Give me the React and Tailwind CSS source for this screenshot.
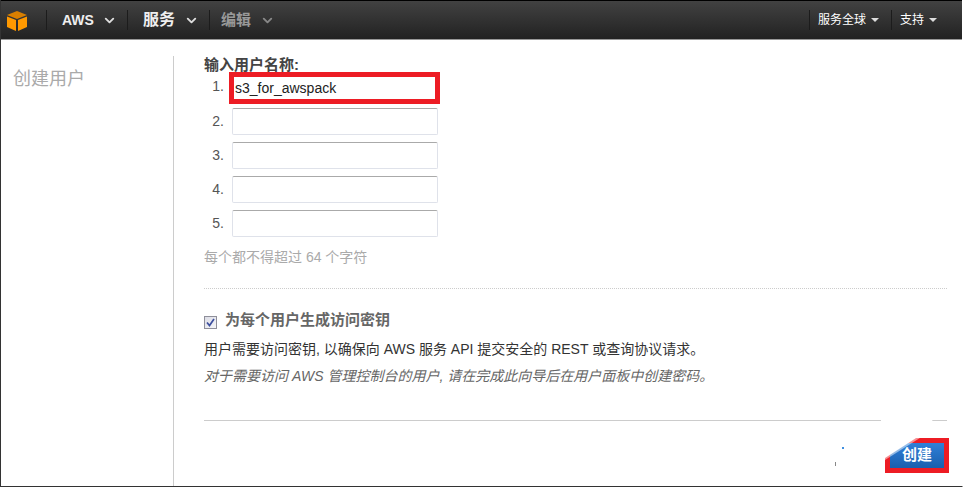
import { ChevronDown } from "lucide-react";

const cjk = "font-['Liberation_Sans','Noto_Sans_CJK_SC',sans-serif]";

function NavDivider() {
  return <div className="w-px h-[20px] bg-[#4d4d4d] border-r border-[#1c1c1c]" />;
}

function Caret() {
  return <span className="ml-[5px] w-0 h-0 border-x-[4px] border-x-transparent border-t-[4px] border-t-[#ddd]" />;
}

function NameRow({ n, value, active }) {
  if (active) {
    return (
      <div className="flex items-center h-[27px] mb-[7px]">
        <span className="w-[20px] shrink-0 text-right text-[14px] text-[#555] mr-[5px] -mt-[3px]">{n}.</span>
        <div className="w-[211px] h-[32px] shrink-0 border-[5px] border-[#ed1c24] bg-white pl-[1px] text-[14px] leading-[23px] text-[#222]">{value}</div>
      </div>
    );
  }
  return (
    <div className="flex items-center h-[27px] mb-[7px]">
      <span className="w-[20px] text-right text-[14px] text-[#555] mr-[8px]">{n}.</span>
      <div className="w-[206px] h-[27px] bg-white border border-[#dfe2ea] border-t-[#aaa] rounded-[2px]" />
    </div>
  );
}

export default function App() {
  return (
    <div className={`w-[963px] h-[487px] relative overflow-hidden bg-white flex flex-col border-l border-r border-b border-l-[#333] border-r-white border-b-[#333] ${cjk}`}>
      {/* top bar */}
      <div className="h-[40px] shrink-0 bg-gradient-to-b from-[#424242] to-[#222] border-t border-black border-b border-b-[#999] flex items-center text-white">
        <svg width="22" height="22" viewBox="0 0 22 22" className="ml-[5px] mr-[18px] mt-[1px]">
          <path d="M11 1 L21 5 L11 9 L1 5 Z" fill="#d97f00" />
          <path d="M1 6.5 L10 10 V21 L1 17 Z" fill="#ff9900" />
          <path d="M21 6.5 L12 10 V21 L21 17 Z" fill="#ff9900" />
        </svg>
        <NavDivider />
        <span className="ml-[15px] w-[31px] text-[14px] font-bold text-[#eee]">AWS</span>
        <ChevronDown size={15} strokeWidth={3} className="ml-[9px] mr-[10px] text-[#ddd]" />
        <NavDivider />
        <span className="ml-[15px] w-[32px] text-[16px] font-bold text-[#eee]">服务</span>
        <ChevronDown size={15} strokeWidth={3} className="ml-[9px] mr-[10px] text-[#ddd]" />
        <NavDivider />
        <span className="ml-[11px] w-[30px] text-[15px] font-bold text-[#999]">编辑</span>
        <ChevronDown size={15} strokeWidth={3} className="ml-[9px] text-[#888]" />
        <div className="flex-1" />
        <NavDivider />
        <span className="ml-[8px] text-[12px]">服务全球</span>
        <Caret />
        <div className="ml-[12px]"><NavDivider /></div>
        <span className="ml-[8px] text-[12px]">支持</span>
        <span className="mr-[25px] flex items-center"><Caret /></span>
      </div>

      <div className="flex-1 flex min-h-0">
        {/* sidebar */}
        <div className="w-[173px] shrink-0 mt-[16px] border-r border-[#ccc] pl-[12px] pt-[10px] text-[18px] text-[#aaa]">创建用户</div>

        {/* main */}
        <div className="flex-1 pl-[30px] pr-[15px] pt-[16px]">
          <div className="text-[15px] font-bold text-[#444] leading-[18px]">输入用户名称:</div>
          <div>
            <NameRow n={1} value="s3_for_awspack" active />
            <NameRow n={2} />
            <NameRow n={3} />
            <NameRow n={4} />
            <NameRow n={5} />
          </div>
          <div className="mt-[11px] text-[14px] leading-[18px] text-[#aaa]">每个都不得超过 64 个字符</div>
          <div className="mt-[22px] border-t border-dotted border-[#ccc]" />
          <div className="mt-[21px] flex items-center h-[20px]">
            <span className="w-[13px] h-[13px] mt-[4px] shrink-0 border border-[#8f8f9a] bg-gradient-to-br from-[#dcdde6] to-[#f5f5f8] flex items-center justify-center">
              <svg width="9" height="9" viewBox="0 0 9 9">
                <path d="M1 4.5 L3.5 7.5 L8 1" fill="none" stroke="#3d4f9e" strokeWidth="1.7" />
              </svg>
            </span>
            <span className="ml-[8px] text-[15px] font-bold text-[#666]">为每个用户生成访问密钥</span>
          </div>
          <div className="mt-[9px] text-[14px] leading-[20px] text-[#333]">用户需要访问密钥, 以确保向 AWS 服务 API 提交安全的 REST 或查询协议请求。</div>
          <div className="mt-[7px] text-[14px] leading-[20px] italic text-[#666]">对于需要访问 AWS 管理控制台的用户, 请在完成此向导后在用户面板中创建密码。</div>
          <div className="mt-[34px] border-t border-[#ccc]" />
          <div className="mt-[17px] flex justify-end -mr-[2px]">
            <div className="w-[64px] h-[35px] border-[5px] border-[#ed1c24] bg-gradient-to-b from-[#2f80d8] to-[#1a5fae] flex items-center justify-center text-[15px] font-bold text-white">创建</div>
          </div>
        </div>
      </div>

      {/* white smear over the corner of the button */}
      <svg width="130" height="90" viewBox="825 397 130 90" className="absolute left-[824px] top-[396px] pointer-events-none">
        <path d="M845 482 L885 459 L921 436 L946 404 L881 404 L881 430 L845 445 Z" fill="#fff" />
        <path d="M885 461 L923 437 L921 436 L885 458 Z" fill="#fff" fillOpacity="0.5" />
        <rect x="842" y="448" width="2" height="2" fill="#3f8fe0" />
        <rect x="835" y="463" width="1" height="4" fill="#888" />
      </svg>
    </div>
  );
}
